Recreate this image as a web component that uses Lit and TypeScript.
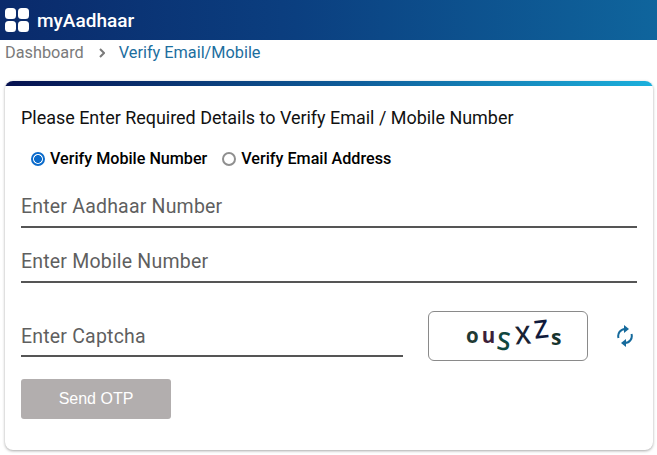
import { css, html, LitElement } from "lit";
import { customElement } from "lit/decorators.js";

@customElement("app-root")
export class AppRoot extends LitElement {
    static override styles = css`
    :host {
      display: block;
      width: 657px;
      height: 455px;
      overflow: hidden;
      background: #fff;
      font-family: Roboto, "Liberation Sans", sans-serif;
      color: #000;
    }
    .header {
      height: 40px;
      display: flex;
      align-items: center;
      gap: 7px;
      padding-left: 5px;
      background: linear-gradient(90deg, #0a2a6b 0%, #0b3f80 45%, #0f659d 100%);
      color: #fff;
      font-size: 19px;
      font-weight: 500;
    }
    .logo {
      display: block;
    }
    .crumbs {
      height: 25px;
      display: flex;
      align-items: center;
      padding-left: 5px;
      font-size: 16.3px;
      color: #7a7a7a;
    }
    .chevron {
      margin: 0 14px 0 15px;
      display: block;
    }
    .current {
      color: #1c6e9e;
    }
    .card {
      margin: 16px 4px 0 5px;
      height: 369px;
      box-sizing: border-box;
      border-radius: 8px;
      background: #fff;
      box-shadow: 0 1px 3px rgba(0, 0, 0, 0.35);
      overflow: hidden;
    }
    .stripe {
      height: 5px;
      background: linear-gradient(90deg, #06114f 0%, #0f5f9c 55%, #1cb0dc 100%);
    }
    .body {
      padding: 22px 16px 0;
    }
    .title {
      font-size: 17.96px;
      line-height: 20px;
      color: #111;
    }
    .radios {
      display: flex;
      align-items: center;
      margin: 21px 0 0 10px;
      font-size: 16.15px;
      font-weight: 500;
      line-height: 20px;
    }
    .radio {
      display: flex;
      align-items: center;
      gap: 5px;
      margin-right: 15px;
    }
    .dot {
      width: 14px;
      height: 14px;
      box-sizing: border-box;
      border-radius: 50%;
      border: 2px solid #8f8f8f;
    }
    .dot.on {
      border-color: #0b6bcb;
      background: radial-gradient(circle, #0b6bcb 0 3.6px, #fff 4.2px);
    }
    .field {
      box-sizing: border-box;
      border-bottom: 2px solid #555;
      font-size: 19.5px;
      color: #5f5f5f;
      line-height: 24px;
      letter-spacing: 0.2px;
    }
    .field.wide {
      margin-top: 22px;
      height: 37px;
      padding-top: 4px;
    }
    .field.second {
      margin-top: 18px;
    }
    .captcha-row {
      display: flex;
      align-items: flex-end;
      margin-top: 28px;
    }
    .field.short {
      width: 382px;
      height: 45px;
      padding-top: 13px;
      margin-bottom: 4px;
    }
    .captcha {
      width: 160px;
      height: 50px;
      box-sizing: border-box;
      margin-left: 25px;
      border: 1px solid #8a8a8a;
      border-radius: 6px;
      display: flex;
      align-items: center;
      padding-left: 37px;
      font-family: "Open Sans", "Noto Sans", sans-serif;
      font-weight: 700;
      font-size: 20.5px;
      line-height: 20px;
    }
    .captcha span {
      display: inline-block;
    }
    .c1 { color: #1f3a34; margin-right: 3px; transform: translateY(-1px); }
    .c2 { color: #3c1f3a; margin-right: 2px; transform: translateY(-1px); }
    .c3 { color: #10473f; margin-right: 4px; font-size: 25px; font-weight: 600; transform: translateY(4px) rotate(6deg); }
    .c4 { color: #1a2233; margin-right: 3px; font-size: 25px; font-weight: 600; transform: translateY(-2px) rotate(-4deg); }
    .c5 { color: #101a3c; margin-right: 3px; font-size: 25px; font-weight: 600; transform: translateY(-8px) rotate(-6deg); }
    .c6 { color: #17332e; font-size: 21px; transform: translateY(1px); }
    .refresh {
      display: block;
      margin: 0 0 14px 29px;
    }
    .send {
      display: block;
      margin-top: 18px;
      width: 150px;
      height: 40px;
      border: none;
      border-radius: 3px;
      background: #b2aeae;
      color: #fff;
      font-family: "Liberation Sans", Arial, sans-serif;
      font-size: 16px;
      padding: 0;
    }
  `;

    override render() {
        return html`
      <div class="header">
        <svg class="logo" width="25" height="25" viewBox="0 0 25 25" fill="#fff">
          <rect x="0" y="0" width="11" height="11" rx="3.5"></rect>
          <rect x="13" y="0" width="11" height="11" rx="3.5"></rect>
          <rect x="0" y="13" width="11" height="11" rx="3.5"></rect>
          <rect x="13" y="13" width="11" height="11" rx="3.5"></rect>
        </svg>
        <span>myAadhaar</span>
      </div>
      <div class="crumbs">
        <span>Dashboard</span>
        <svg class="chevron" width="6" height="10" viewBox="0 0 6 10" fill="none" stroke="#7a7a7a" stroke-width="2">
          <path d="M1 1l4 4-4 4"></path>
        </svg>
        <span class="current">Verify Email/Mobile</span>
      </div>
      <div class="card">
        <div class="stripe"></div>
        <div class="body">
          <div class="title">Please Enter Required Details to Verify Email / Mobile Number</div>
          <div class="radios">
            <div class="radio"><div class="dot on"></div>Verify Mobile Number</div>
            <div class="radio"><div class="dot"></div>Verify Email Address</div>
          </div>
          <div class="field wide">Enter Aadhaar Number</div>
          <div class="field wide second">Enter Mobile Number</div>
          <div class="captcha-row">
            <div class="field short">Enter Captcha</div>
            <div class="captcha">
              <span class="c1">o</span><span class="c2">u</span><span class="c3">S</span><span class="c4">X</span><span class="c5">Z</span><span class="c6">s</span>
            </div>
            <svg class="refresh" width="16" height="22" viewBox="0 0 16 22" fill="none" stroke="#156a9c" stroke-width="2">
              <path d="M1.5 13A7 7 0 0 1 8 4"></path>
              <path d="M14.5 9A7 7 0 0 1 8 18"></path>
              <path d="M7 0l5 4-5 4z" fill="#156a9c" stroke="none"></path>
              <path d="M9 14l-5 4 5 4z" fill="#156a9c" stroke="none"></path>
            </svg>
          </div>
          <button class="send">Send OTP</button>
        </div>
      </div>
    `;
    }
}

declare global {
    interface HTMLElementTagNameMap {
        "app-root": AppRoot;
    }
}
